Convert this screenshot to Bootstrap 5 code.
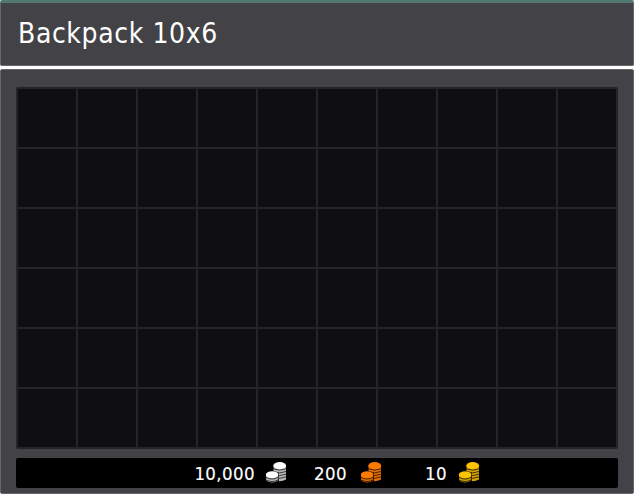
<!DOCTYPE html>
<html lang="en">
<head>
<meta charset="utf-8">
<meta name="viewport" content="width=device-width, initial-scale=1">
<title>Backpack</title>
<link href="https://cdn.jsdelivr.net/npm/bootstrap@5.3.0/dist/css/bootstrap.min.css" rel="stylesheet">
<style>
body{font-family:"DejaVu Sans Condensed","DejaVu Sans",sans-serif;font-stretch:condensed;background:#fff;overflow:hidden}
.window{height:494px;gap:3px}
.panel{background:#434347;border:1px solid #67666b;border-radius:2px}
.title-bar{height:66px;border-top:3px solid #52796f;padding:0 17px}
.title-bar h1{font-size:28px;font-weight:400;line-height:62px;letter-spacing:.6px;color:#fff}
.bag{padding:17px 15px 4px}
.slots{display:grid;grid-template-columns:repeat(10,58px);grid-template-rows:repeat(6,58px);gap:2px;padding:2px;background:#252526;border-radius:2px;width:602px}
.slot{background:#0f0e13}
.purse{height:30px;margin-top:9px;background:#000;border-radius:2px;color:#fff;font-size:18.5px;line-height:30px;letter-spacing:.4px;-webkit-text-stroke:.15px #fff}
.amount{text-align:right;height:30px;padding-top:1px}
.silver-amt{width:239px}
.copper-amt{width:60px}
.gold-amt{width:65px}
.coins{width:22px;height:22px;flex:none}
.silver-icon{--face:#fff;--side:#b9b9b9;margin-left:10px}
.copper-icon{--face:#ff7b00;--side:#e66e00;margin-left:13px}
.gold-icon{--face:#ffc400;--side:#d4a300;margin-left:11px}
</style>
</head>
<body>
<svg width="0" height="0" class="position-absolute" aria-hidden="true">
<symbol id="coins" viewBox="0 0 22 22">
<path d="M8.500 3.500V17.500q6 3.500 12.500 0V3.500z" fill="var(--side)"/>
<path d="M8 6.700q6.500 3 13.500 0M8 9.400q6.500 3 13.500 0M8 12.100q6.500 3 13.500 0M8 14.800q6.500 3 13.500 0" fill="none" stroke="#000" stroke-width=".7"/>
<ellipse cx="14.700" cy="3.600" rx="6.400" ry="3.500" fill="var(--face)"/>
<path d="M0 11.500q6-5 14 0v9.500H0z" fill="#000"/>
<path d="M1 12.500v6q6 4 12.300 0V12.500z" fill="var(--side)"/>
<path d="M.7 15.300q6.300 3.500 12.600 0M.7 17.800q6.300 3.500 12.600 0" fill="none" stroke="#000" stroke-width=".7"/>
<ellipse cx="7.100" cy="12.600" rx="6.200" ry="3.300" fill="var(--face)"/>
</symbol>
</svg>
<main class="window d-flex flex-column">
<header class="panel title-bar"><h1 class="m-0">Backpack 10x6</h1></header>
<section class="panel bag flex-grow-1">
<div class="slots" id="slots"></div>
<div class="purse d-flex align-items-center">
<span class="amount silver-amt">10,000</span><svg class="coins silver-icon"><use href="#coins"/></svg>
<span class="amount copper-amt">200</span><svg class="coins copper-icon"><use href="#coins"/></svg>
<span class="amount gold-amt">10</span><svg class="coins gold-icon"><use href="#coins"/></svg>
</div>
</section>
</main>
<script>
document.getElementById('slots').innerHTML='<div class="slot"></div>'.repeat(60);
</script>
<script src="https://cdn.jsdelivr.net/npm/bootstrap@5.3.0/dist/js/bootstrap.bundle.min.js"></script>
</body>
</html>
